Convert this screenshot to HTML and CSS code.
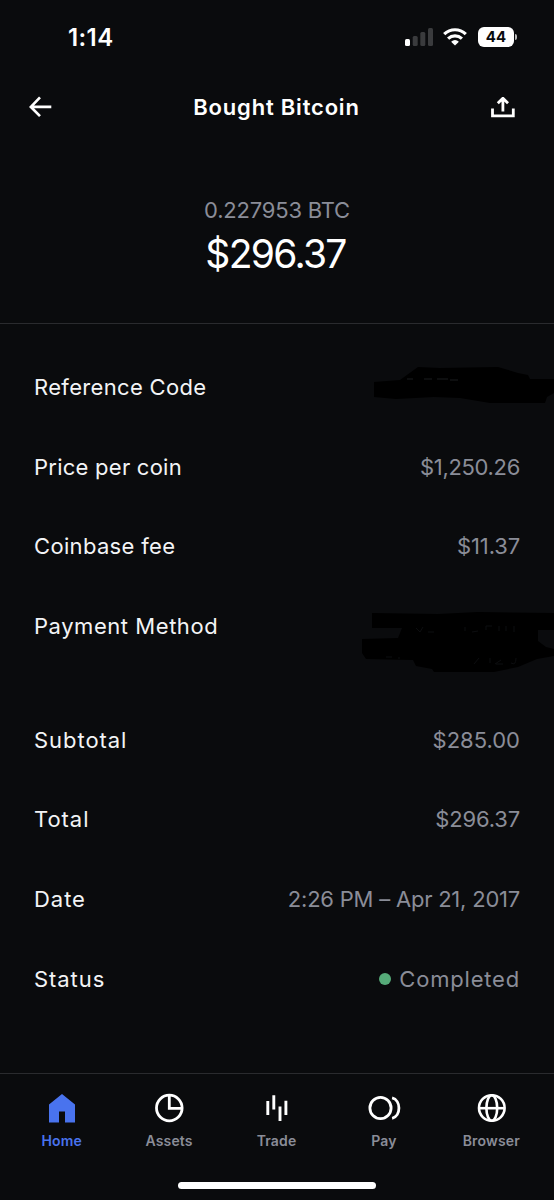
FILE: index.html
```html
<!DOCTYPE html>
<html lang="en">
<head>
<meta charset="utf-8">
<title>Bought Bitcoin</title>
<link rel="stylesheet" href="styles.css">
</head>
<body>
<div class="screen">
  <div class="status-bar">
    <span class="clock">1:14</span>
    <div class="indicators">
      <svg class="signal" width="28" height="18" viewBox="0 0 28 18">
        <rect x="0" y="11" width="5" height="7" rx="1.5" fill="#fff"/>
        <rect x="7.7" y="8" width="5" height="10" rx="1.5" fill="#3a3b3d"/>
        <rect x="15.3" y="4" width="5" height="14" rx="1.5" fill="#3a3b3d"/>
        <rect x="23" y="0" width="5" height="18" rx="1.5" fill="#3a3b3d"/>
      </svg>
      <svg class="wifi" width="24" height="18" viewBox="0 0 24 18">
        <path d="M1.2 6.1C7.3.3 16.7.3 22.8 6.1M5.1 10.6C9.1 6.9 14.9 6.9 18.9 10.6" fill="none" stroke="#fff" stroke-width="3.2"/>
        <path d="M8.1 13.8Q12 10.3 15.9 13.8L12 17.6Z" fill="#fff"/>
      </svg>
      <span class="battery">44</span><span class="battery-tip"></span>
    </div>
  </div>

  <header class="nav">
    <svg width="23" height="22" viewBox="0 0 23 22" fill="none" stroke="#fff" stroke-width="2.7">
      <path d="M22.3 10.9H2M11 1.4 1.9 10.9 11 20.1"/>
    </svg>
    <h1 class="title">Bought Bitcoin</h1>
    <svg width="24" height="21" viewBox="0 0 24 21" fill="none" stroke="#fff" stroke-width="2.8">
      <path d="M1.5 11.5V18.8H22.3V11.5M11.9 14.5V1.5M6.8 6.3 11.9 1.2 17 6.3"/>
    </svg>
  </header>

  <section class="summary">
    <div class="quantity">0.227953 BTC</div>
    <div class="amount">$296.37</div>
  </section>

  <main class="details">
    <div class="row"><span class="label">Reference Code</span>
      <svg class="scribble scribble-ref" width="184" height="42" viewBox="0 0 184 42">
        <path d="M4 17 30 15 48 2 70 3 128 2 148 8 158 10 160 14 184 14V28L177 32 175 38 120 38 90 33 64 32 26 34 4 32Z" fill="#000"/>
        <path d="M37 14H43M54 14H62M67 14H78M80 15H88" stroke="#1b1c1e" stroke-width="1"/>
      </svg>
    </div>
    <div class="row"><span class="label snug">Price per coin</span><span class="value v-price">$1,250.26</span></div>
    <div class="row"><span class="label">Coinbase fee</span><span class="value v-fee">$11.37</span></div>
    <div class="row row-tall"><span class="label wide">Payment Method</span>
      <svg class="scribble scribble-pay" width="196" height="66" viewBox="0 0 196 66">
        <path d="M14 5 80 6 120 4 196 5V22H180V33L188 39 196 41V48L179 51 160 59 136 64 76 64 74 61 58 58 55 52 8 51 4 45V31L40 30 44 20H14Z" fill="#000"/>
        <path d="M58 20 62 24 65 19M70 24H76M107 23V19M114 24 120 23M128 22V18H134M141 18V23M148 18V23M156 18V24M28 49H34M40 50H42M116 56 121 50M132 55V50M137 56 143 52M138 56H145M153 55Q158 58 158 50" fill="none" stroke="#0d0e10"/>
      </svg>
    </div>
    <div class="row"><span class="label wider">Subtotal</span><span class="value">$285.00</span></div>
    <div class="row"><span class="label wider">Total</span><span class="value v-total">$296.37</span></div>
    <div class="row"><span class="label wider">Date</span><span class="value v-date">2:26 PM – Apr 21, 2017</span></div>
    <div class="row"><span class="label wider">Status</span><span class="value v-status"><i class="dot"></i>Completed</span></div>
  </main>

  <nav class="tabs">
    <div class="tab active">
      <svg width="30" height="30" viewBox="0 0 30 30"><path d="M2 11.5 15 1 28 11.5V29.5H18V18.5H12V29.5H2Z" fill="#4973ee"/></svg>
      <span>Home</span>
    </div>
    <div class="tab">
      <svg width="30" height="30" viewBox="0 0 30 30" fill="none" stroke="#fff" stroke-width="2.8"><circle cx="15.3" cy="15" r="12.8"/><path d="M15.3 2V15.4H28"/></svg>
      <span>Assets</span>
    </div>
    <div class="tab">
      <svg width="30" height="30" viewBox="0 0 30 30" stroke="#fff" stroke-width="2.9"><path d="M6.8 8V22M12.8 2.2V16.5M19 13.5V28M24.9 7.8V22"/></svg>
      <span>Trade</span>
    </div>
    <div class="tab">
      <svg width="34" height="30" viewBox="0 0 34 30" fill="none" stroke="#fff" stroke-width="2.8"><circle cx="13.5" cy="15" r="10.6"/><path d="M25.1 4.8C34.2 7 34.2 23.2 25.1 25.3"/></svg>
      <span>Pay</span>
    </div>
    <div class="tab">
      <svg width="30" height="30" viewBox="0 0 30 30" fill="none" stroke="#fff" stroke-width="2.6"><circle cx="15.8" cy="15" r="12.8"/><ellipse cx="15.8" cy="15" rx="5.4" ry="12.8"/><path d="M3 15.2H28.6"/></svg>
      <span>Browser</span>
    </div>
  </nav>
  <div class="home-indicator"></div>
</div>
</body>
</html>
```
FILE: styles.css
```css
* { box-sizing: border-box; }
body { margin: 0; background: #0a0b0d; color: #fff; font-family: Inter, "Liberation Sans", sans-serif; }
svg { display: block; flex: none; }
.screen { width: 554px; height: 1200px; display: flex; flex-direction: column; overflow: hidden; }

.status-bar { height: 74px; padding: 0 37px 0 68px; display: flex; align-items: center; justify-content: space-between; }
.clock { font-size: 24px; font-weight: 600; letter-spacing: 0.4px; }
.indicators { display: flex; align-items: center; }
.wifi { margin-left: 10px; }
.battery { width: 36px; height: 20px; margin-left: 11px; border-radius: 6px; background: #fff; color: #0a0b0d; font-size: 15px; font-weight: 700; line-height: 20px; text-align: center; }
.battery-tip { width: 2px; height: 6px; margin-left: 1px; border-radius: 0 3px 3px 0; background: #bbb; }

.nav { height: 66px; padding: 0 39px 0 29px; display: flex; align-items: center; justify-content: space-between; }
.title { margin: 0 0 0 10px; font-size: 22px; font-weight: 600; letter-spacing: 0.8px; white-space: nowrap; }

.summary { height: 184px; padding-top: 56px; border-bottom: 1px solid #2a2b2e; text-align: center; }
.quantity { color: #8a8d98; font-size: 22px; line-height: 28px; letter-spacing: -0.2px; }
.amount { font-size: 39px; line-height: 50px; margin-top: 5px; padding-right: 3px; letter-spacing: -1.7px; }

.details { height: 749px; padding: 23px 34px 0; }
.row { height: 79.7px; display: flex; align-items: center; justify-content: space-between; position: relative; font-size: 22px; white-space: nowrap; }
.row-tall { height: 113.7px; align-items: flex-start; padding-top: 27px; }
.label { color: #f3f4f6; letter-spacing: 0.33px; }
.snug { letter-spacing: 0.25px; }
.wide { letter-spacing: 0.55px; }
.wider { letter-spacing: 0.95px; }
.value { color: #8a8d98; display: flex; align-items: center; }
.v-price { letter-spacing: -0.33px; }
.v-fee, .v-total { letter-spacing: -0.15px; }
.v-date { letter-spacing: -0.22px; }
.v-status { letter-spacing: 0.8px; }
.dot { width: 12px; height: 12px; margin-right: 8px; border-radius: 50%; background: #56ab79; }
.scribble { position: absolute; right: -34px; }
.scribble-ref { top: 18px; }
.scribble-pay { top: 22px; right: -34px; }

.tabs { height: 97px; padding: 19px 9px 0 8px; border-top: 1px solid #2a2b2e; display: grid; grid-template-columns: repeat(5, 1fr); }
.tab { display: flex; flex-direction: column; align-items: center; gap: 10px; color: #8a8d98; font-size: 14px; font-weight: 600; line-height: 16px; letter-spacing: 0.15px; }
.active { color: #4973ee; }
.home-indicator { width: 198px; height: 7px; margin: 12px auto 0; border-radius: 4px; background: #fff; }
```
